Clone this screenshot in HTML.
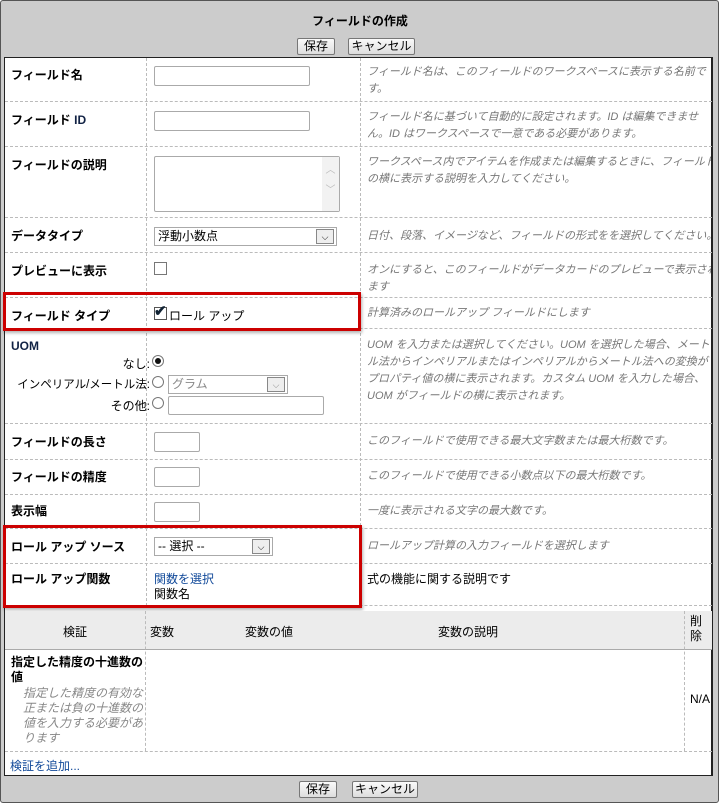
<!DOCTYPE html>
<html><head><meta charset="utf-8"><style>
*{box-sizing:border-box;margin:0;padding:0}
body{width:720px;height:804px;background:#fff;font-family:"Liberation Sans","Noto Sans CJK JP",sans-serif;font-size:12px;color:#000;position:relative;overflow:hidden}
.frame{position:absolute;left:0;top:0;width:719px;height:803px;background:#ccc;border:1px solid #555;border-radius:3px}
.white{position:absolute;left:4px;top:57px;width:709px;height:719px;background:#fff;border:1px solid #222;border-right:2px solid #222}
.a{position:absolute;white-space:nowrap}
.h{position:absolute;left:5px;width:707px;border-top:1px dashed #bbb;height:0}
.v{position:absolute;width:0;border-left:1px dashed #bbb}
.lb{font-weight:bold;left:11px}
.d{left:367px;width:344px;overflow:hidden;color:#777;font-style:italic;line-height:17px;font-size:11px}
.in{position:absolute;border:1px solid #aaa;border-radius:2px;background:#fff}
.btn{position:absolute;height:17px;border:1px solid #777;background:linear-gradient(#fafafa,#ddd);font-size:12px;text-align:center;line-height:15px;border-radius:2px}
.sel{position:absolute;border:1px solid #aaa;background:#fff;height:19px;padding-left:3px;line-height:17px}
.sel .ar{position:absolute;right:2px;top:1px;width:18px;height:15px;border:1px solid #888;background:#eee;font-size:9px;text-align:center;line-height:14px}
.red{position:absolute;border:3px solid #c00;box-shadow:1px 2px 3px rgba(0,0,0,.3)}
.rad{position:absolute;width:12px;height:12px;border:1px solid #777;border-radius:50%;background:#fff}
</style></head><body>
<div class="frame"></div>
<div class="a" style="left:0;width:720px;top:12px;text-align:center;font-weight:bold;font-size:12px">フィールドの作成</div>
<div class="btn" style="left:297px;top:38px;width:38px">保存</div>
<div class="btn" style="left:348px;top:38px;width:67px">キャンセル</div>
<div class="white"></div>

<div class="v" style="left:146px;top:58px;height:548px"></div>
<div class="v" style="left:360px;top:58px;height:548px"></div>
<div class="h" style="top:101px"></div>
<div class="h" style="top:146px"></div>
<div class="h" style="top:217px"></div>
<div class="h" style="top:252px"></div>
<div class="h" style="top:297px"></div>
<div class="h" style="top:328px"></div>
<div class="h" style="top:423px"></div>
<div class="h" style="top:459px"></div>
<div class="h" style="top:494px"></div>
<div class="h" style="top:528px"></div>
<div class="h" style="top:563px"></div>
<div class="h" style="top:605px"></div>

<div class="a lb" style="top:66px">フィールド名</div>
<div class="in" style="left:154px;top:66px;width:156px;height:20px"></div>
<div class="a d" style="top:64px">フィールド名は、このフィールドのワークスペースに表示する名前で<br>す。</div>

<div class="a lb" style="top:111px">フィールド <span style="color:#124">ID</span></div>
<div class="in" style="left:154px;top:111px;width:156px;height:20px"></div>
<div class="a d" style="top:109px">フィールド名に基づいて自動的に設定されます。ID は編集できませ<br>ん。ID はワークスペースで一意である必要があります。</div>

<div class="a lb" style="top:156px">フィールドの説明</div>
<div class="in" style="left:154px;top:156px;width:186px;height:56px"><div style="position:absolute;right:0;top:0;width:17px;height:54px;background:#f2f2f2;color:#bbb;font-size:10px;text-align:center;line-height:20px;padding-top:4px">︿<br>﹀</div></div>
<div class="a d" style="top:154px">ワークスペース内でアイテムを作成または編集するときに、フィールド<br>の横に表示する説明を入力してください。</div>

<div class="a lb" style="top:227px">データタイプ</div>
<div class="sel" style="left:154px;top:227px;width:183px">浮動小数点<div class="ar">⌵</div></div>
<div class="a d" style="top:228px">日付、段落、イメージなど、フィールドの形式をを選択してください。</div>

<div class="a lb" style="top:262px">プレビューに表示</div>
<div class="in" style="left:154px;top:262px;width:13px;height:13px;border-color:#777;border-radius:0"></div>
<div class="a d" style="top:262px">オンにすると、このフィールドがデータカードのプレビューで表示され<br>ます</div>

<div class="a lb" style="top:307px">フィールド タイプ</div>
<div class="in" style="left:154px;top:307px;width:13px;height:13px;border-color:#555;border-radius:0"></div>
<div class="a" style="left:154px;top:302px;font-size:15px;font-weight:bold;color:#123">✔</div>
<div class="a" style="left:169px;top:307px">ロール アップ</div>
<div class="a d" style="top:305px">計算済みのロールアップ フィールドにします</div>
<div class="red" style="left:3px;top:292px;width:358px;height:39px"></div>

<div class="a" style="left:11px;top:339px;font-weight:bold;color:#124">UOM</div>
<div class="a" style="left:0;width:150px;text-align:right;top:355px">なし:</div>
<div class="rad" style="left:152px;top:355px"><div style="position:absolute;left:2px;top:2px;width:6px;height:6px;border-radius:50%;background:#111"></div></div>
<div class="a" style="left:0;width:150px;text-align:right;top:376px;font-size:11.5px">インペリアル/メートル法:</div>
<div class="rad" style="left:152px;top:376px"></div>
<div class="sel" style="left:168px;top:375px;width:120px;color:#888">グラム<div class="ar">⌵</div></div>
<div class="a" style="left:0;width:150px;text-align:right;top:397px">その他:</div>
<div class="rad" style="left:152px;top:397px"></div>
<div class="in" style="left:168px;top:396px;width:156px;height:19px"></div>
<div class="a d" style="top:337px">UOM を入力または選択してください。UOM を選択した場合、メート<br>ル法からインペリアルまたはインペリアルからメートル法への変換が<br>プロパティ値の横に表示されます。カスタム UOM を入力した場合、<br>UOM がフィールドの横に表示されます。</div>

<div class="a lb" style="top:433px">フィールドの長さ</div>
<div class="in" style="left:154px;top:432px;width:46px;height:20px"></div>
<div class="a d" style="top:433px">このフィールドで使用できる最大文字数または最大桁数です。</div>

<div class="a lb" style="top:468px">フィールドの精度</div>
<div class="in" style="left:154px;top:467px;width:46px;height:20px"></div>
<div class="a d" style="top:468px">このフィールドで使用できる小数点以下の最大桁数です。</div>

<div class="a lb" style="top:502px">表示幅</div>
<div class="in" style="left:154px;top:502px;width:46px;height:20px"></div>
<div class="a d" style="top:503px">一度に表示される文字の最大数です。</div>

<div class="a lb" style="top:538px">ロール アップ ソース</div>
<div class="sel" style="left:154px;top:537px;width:119px">-- 選択 --<div class="ar">⌵</div></div>
<div class="a d" style="top:538px">ロールアップ計算の入力フィールドを選択します</div>

<div class="a lb" style="top:570px">ロール アップ関数</div>
<div class="a" style="left:154px;top:570px;color:#124a9a">関数を選択</div>
<div class="a" style="left:154px;top:585px">関数名</div>
<div class="a" style="left:367px;top:570px">式の機能に関する説明です</div>
<div class="red" style="left:3px;top:525px;width:359px;height:83px"></div>

<div style="position:absolute;left:5px;top:611px;width:707px;height:39px;background:#ececec;border-bottom:1px solid #aaa"></div>
<div class="v" style="left:145px;top:611px;height:140px"></div>
<div class="v" style="left:684px;top:611px;height:140px"></div>
<div class="a" style="left:5px;width:140px;text-align:center;top:623px">検証</div>
<div class="a" style="left:150px;top:623px">変数</div>
<div class="a" style="left:245px;top:623px">変数の値</div>
<div class="a" style="left:438px;top:623px">変数の説明</div>
<div class="a" style="left:690px;top:614px;line-height:15px">削<br>除</div>
<div class="a" style="left:11px;top:655px;font-weight:bold;line-height:15px">指定した精度の十進数の<br>値</div>
<div class="a" style="left:23px;top:686px;color:#888;font-style:italic;line-height:15px">指定した精度の有効な<br>正または負の十進数の<br>値を入力する必要があ<br>ります</div>
<div class="a" style="left:690px;top:692px">N/A</div>
<div class="h" style="top:751px"></div>
<div class="a" style="left:10px;top:757px;color:#124a9a">検証を追加...</div>

<div class="btn" style="left:299px;top:781px;width:38px">保存</div>
<div class="btn" style="left:352px;top:781px;width:66px">キャンセル</div>
</body></html>
